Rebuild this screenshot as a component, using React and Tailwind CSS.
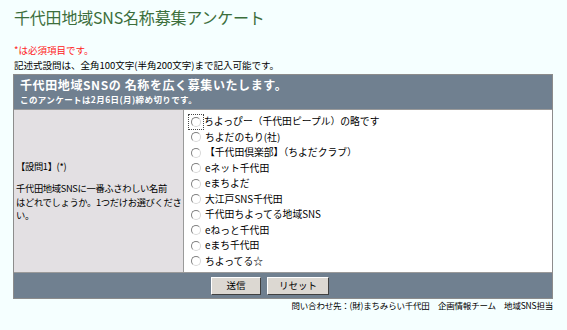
const options = [
    'ちよっぴー（千代田ピープル）の略です',
    'ちよだのもり(社)',
    '【千代田倶楽部】（ちよだクラブ）',
    'eネット千代田',
    'eまちよだ',
    '大江戸SNS千代田',
    '千代田ちよってる地域SNS',
    'eねっと千代田',
    'eまち千代田',
    'ちよってる☆',
];

const Radio = () => (
    <span className="inline-block w-[10px] h-[10px] rounded-full bg-white border border-t-[#808080] border-l-[#808080] border-r-[#d8d8d8] border-b-[#d8d8d8] shrink-0" />
);

export default function App() {
    return (
        <div
            className="w-[567px] h-[330px] bg-[#f5ffff] text-black overflow-hidden"
            style={{ fontFamily: '"Noto Sans CJK JP", "Noto Sans", sans-serif' }}
        >
            <h1 className="pl-[14px] pt-[6px] text-[16px] leading-[22px] text-[#3c6e3c] tracking-[-0.2px]">
                千代田地域SNS名称募集アンケート
            </h1>

            <p className="pl-[14px] mt-[16px] text-[9.5px] leading-[12px] text-[#ff2020]">*は必須項目です。</p>
            <p className="pl-[14px] mt-[3px] text-[9.5px] leading-[12px]">
                記述式設問は、全角100文字(半角200文字)まで記入可能です。
            </p>

            <div className="ml-[13px] mt-[3px] w-[540px] border border-[#8c8c8c] bg-[#708090]">
                <div className="h-[34px] px-[6px] pt-[2px] text-white font-bold">
                    <div className="text-[12px] leading-[16px] tracking-[0.6px]">千代田地域SNSの 名称を広く募集いたします。</div>
                    <div className="text-[8.5px] leading-[13px] tracking-[0.4px]">このアンケートは2月6日(月)締め切りです。</div>
                </div>

                <div className="flex border-t border-[#9a9a9a]">
                    <div className="w-[170px] bg-[#e3e0e3] border-r border-[#9a9a9a] px-[2px] flex flex-col justify-center text-[9.3px] leading-[13.5px] tracking-[-0.35px] whitespace-nowrap">
                        <p>【設問1】(*)</p>
                        <div className="mt-[9px]">
                            <p>千代田地域SNSに一番ふさわしい名前</p>
                            <p>はどれでしょうか。1つだけお選びくださ</p>
                            <p>い。</p>
                        </div>
                    </div>
                    <div className="flex-1 bg-white pl-[4px] pt-[4px] pb-[3px]">
                        {options.map((o, i) => (
                            <div key={o} className="flex items-center h-[15.5px] text-[9.8px]">
                                <span
                                    className={
                                        i === 0
                                            ? 'flex items-center justify-center w-[16px] h-[16px] border border-dotted border-[#444]'
                                            : 'flex items-center justify-center w-[16px] h-[16px]'
                                    }
                                >
                                    <Radio />
                                </span>
                                <span className={i === 0 ? 'ml-[0px]' : 'ml-[1px]'}>{o}</span>
                            </div>
                        ))}
                    </div>
                </div>

                <div className="h-[26px] flex items-center justify-center gap-[6px] pr-[26px] border-t border-[#9a9a9a]">
                    <button className="w-[50px] h-[18px] bg-[#dcd8d2] text-[9.5px] border border-t-white border-l-white border-r-[#404040] border-b-[#404040]">
                        送信
                    </button>
                    <button className="w-[62px] h-[18px] bg-[#dcd8d2] text-[9.5px] border border-t-white border-l-white border-r-[#404040] border-b-[#404040]">
                        リセット
                    </button>
                </div>
            </div>

            <p className="w-[553px] text-right text-[8.5px] leading-[12px] tracking-[-0.2px]">
                問い合わせ先：(財)まちみらい千代田　企画情報チーム　地域SNS担当
            </p>
        </div>
    );
}
